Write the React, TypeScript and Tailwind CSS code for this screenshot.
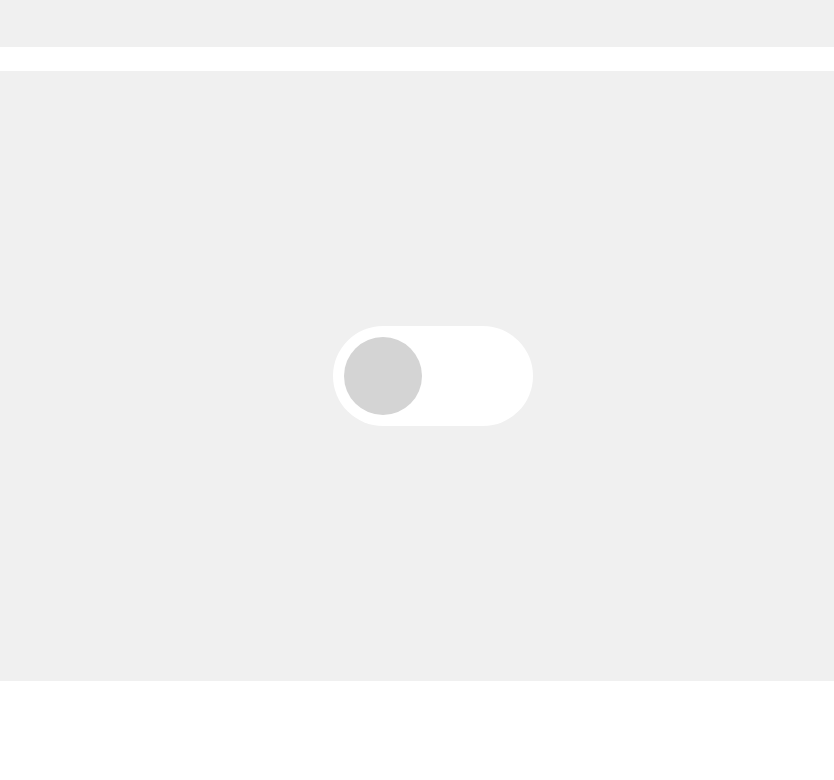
export default function App() {
  return (
    <div className="min-h-[780px] bg-white">
      <div className="h-[47px] bg-[#f0f0f0]" />
      <div className="h-[24px] bg-white" />
      <div className="flex h-[610px] items-center justify-center bg-[#f0f0f0] pl-[32px]">
        <button
          type="button"
          aria-label="toggle"
          className="flex h-[100px] w-[200px] items-center rounded-full bg-white pl-[11px]"
        >
          <span className="block h-[78px] w-[78px] rounded-full bg-[#d4d4d4]" />
        </button>
      </div>
    </div>
  );
}
